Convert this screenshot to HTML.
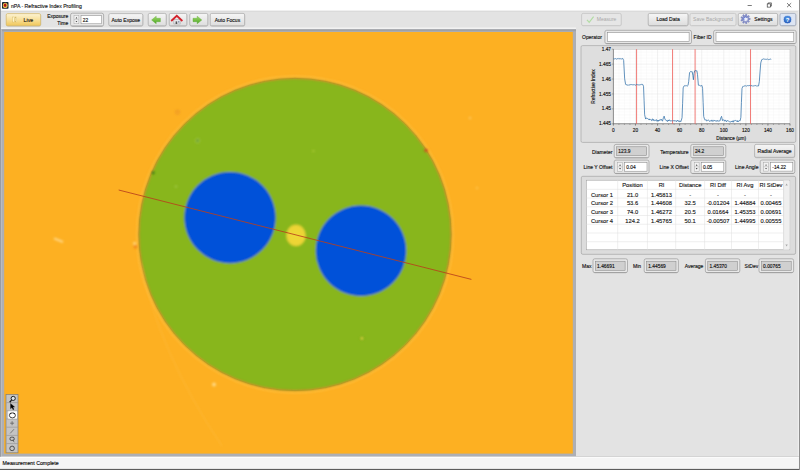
<!DOCTYPE html>
<html><head><meta charset="utf-8"><title>nPA - Refractive Index Profiling</title>
<style>
html,body{margin:0;padding:0;background:#e3e3e3;overflow:hidden}
svg{display:block;font-family:"Liberation Sans",sans-serif;font-size:5.05px;fill:#111}
text{stroke:#111;stroke-width:0.13px}
.ns,.ns text{stroke:none}
.g line{stroke:#e4e4e4;stroke-width:0.5}
.m line{stroke:#f4f4f4;stroke-width:0.4}
.c line{stroke:#ee5a56;stroke-width:0.8}
.tb line{stroke:#dedede;stroke-width:0.5}
.ax text{font-size:4.75px;fill:#111}
.tt text{font-size:5.75px;fill:#1a1a1a}
</style></head><body>
<svg width="800" height="470" viewBox="0 0 800 470">
<defs>
<linearGradient id="gbtn" x1="0" y1="0" x2="0" y2="1"><stop offset="0" stop-color="#f6f6f6"/><stop offset="1" stop-color="#dddddd"/></linearGradient>
<linearGradient id="glive" x1="0" y1="0" x2="0" y2="1"><stop offset="0" stop-color="#fdf4d4"/><stop offset="0.5" stop-color="#f8e09a"/><stop offset="1" stop-color="#f0c658"/></linearGradient>
<radialGradient id="ghelp" cx="0.5" cy="0.35" r="0.7"><stop offset="0" stop-color="#5aa0ee"/><stop offset="1" stop-color="#1c4fb0"/></radialGradient>
<clipPath id="imgclip"><rect x="4.2" y="32" width="568.6" height="421.6"/></clipPath>
<filter id="b1" x="-5%" y="-5%" width="110%" height="110%"><feGaussianBlur stdDeviation="0.8"/></filter>
<filter id="b2" x="-50%" y="-50%" width="200%" height="200%"><feGaussianBlur stdDeviation="0.8"/></filter>
<linearGradient id="gframe" x1="0" y1="0" x2="0" y2="1"><stop offset="0" stop-color="#d4d6da"/><stop offset="0.01" stop-color="#b1b3b8"/><stop offset="1" stop-color="#b1b3b8"/></linearGradient>
<radialGradient id="gyel"><stop offset="0" stop-color="#f0d836"/><stop offset="0.85" stop-color="#ecd436"/><stop offset="1" stop-color="#d2cc30"/></radialGradient>
<linearGradient id="garr" x1="0" y1="0" x2="0" y2="1"><stop offset="0" stop-color="#a4dc6a"/><stop offset="1" stop-color="#4aa524"/></linearGradient>
<filter id="soft" filterUnits="userSpaceOnUse" x="-10" y="-10" width="820" height="490"><feGaussianBlur stdDeviation="0.8"/></filter>
</defs>
<g>

<!-- window background -->
<rect x="-6" y="-6" width="812" height="482" fill="#e3e3e3"/>
<rect x="-6" y="-6" width="812" height="17" fill="#ffffff"/>
<!-- title bar -->
<rect x="2" y="2" width="6.5" height="6.8" rx="0.8" fill="#152430"/>
<ellipse cx="5.2" cy="5.4" rx="2.4" ry="2.6" fill="#e8c050"/><ellipse cx="5.1" cy="5.3" rx="1.3" ry="1.7" fill="#b01414"/>
<text x="11" y="8" font-size="5.15" fill="#222">nPA - Refractive Index Profiling</text>
<g stroke="#222" stroke-width="0.6" fill="none">
<line x1="747.6" y1="5.5" x2="751.8" y2="5.5"/>
<rect x="767.2" y="3.9" width="3.2" height="3.2"/><path d="M768.2,3.9V2.9h3.2v3.2h-1"/>
<path d="M787,3.1 l4.2,4.1 M791.2,3.1 l-4.2,4.1"/>
</g>

<!-- image panel -->
<rect x="0" y="10.6" width="800" height="1.2" fill="#d9d9d9"/><rect x="0" y="27.5" width="576" height="1.4" fill="#f3f3f3"/><rect x="0" y="29.1" width="576" height="427.5" fill="#adafb4"/><rect x="0" y="29.6" width="576" height="1.6" fill="#9fa1a5"/><rect x="-6" y="-6" width="7" height="482" fill="#9a9ca1"/><rect x="1" y="29" width="1" height="427" fill="#b9bbc0"/>
<rect x="4.2" y="32" width="568.6" height="421.6" fill="#fdb022"/>
<g clip-path="url(#imgclip)">
  <circle cx="295" cy="234.5" r="157.8" fill="none" stroke="#ffc242" stroke-width="2.2" opacity="0.7" filter="url(#b1)"/>
  <g filter="url(#b1)">
  <circle cx="295" cy="234.5" r="156" fill="#88b61b" stroke="#b07c2c" stroke-width="0.8"/>
  <circle cx="230" cy="217.6" r="45.6" fill="#0251d9"/>
  <circle cx="361" cy="250.8" r="45.2" fill="#0251d9"/>
  <ellipse cx="296" cy="235.4" rx="9.9" ry="10.9" fill="url(#gyel)"/>
  </g>
  <circle cx="295" cy="234.5" r="156.1" fill="none" stroke="#9c7424" stroke-width="0.5" opacity="0.55"/>
  <g filter="url(#b2)">
   <path d="M54,238.4 l9,3.6" stroke="#ffd684" stroke-width="2" fill="none"/>
   <circle cx="177.5" cy="112.3" r="1.9" fill="none" stroke="#ea9426" stroke-width="1.1"/>
   <circle cx="197.6" cy="140.7" r="2" fill="#5f9a24" stroke="#a8cc54" stroke-width="1"/>
   <circle cx="153.2" cy="172.7" r="1.5" fill="#3f7a18"/>
   <circle cx="176" cy="186.5" r="1.3" fill="#9cc43c"/>
   <circle cx="135.5" cy="246.8" r="2" fill="#f28c20"/><circle cx="134.6" cy="243.3" r="1.6" fill="#ffd478"/>
   <circle cx="361.9" cy="338.4" r="1.8" fill="#e8dc40" stroke="#74a41c" stroke-width="1"/>
   <circle cx="214" cy="384.6" r="2" fill="#ffd880"/>
   <circle cx="426" cy="150.4" r="1.6" fill="#d04a20"/>
   <circle cx="313.4" cy="151" r="1.1" fill="#b0cc3c"/>
   <circle cx="470" cy="118" r="1.3" fill="#ffc656"/>
   <circle cx="477" cy="188" r="1.1" fill="#ffc656"/>
   <path d="M141,262 C150,310 172,372 222,446" stroke="#ffbe48" stroke-width="1.1" fill="none" opacity="0.45"/>
  </g>
  <line x1="118.7" y1="190" x2="471.4" y2="279.4" stroke="#b8401c" stroke-width="0.85"/>
</g>

<!-- tools palette -->
<rect x="6" y="394.6" width="12" height="58.2" fill="#c4c4c4" stroke="#7e7e7e" stroke-width="0.7"/>
<rect x="8.2" y="410.8" width="8.8" height="8.2" fill="#ffffff"/>
<g stroke="#777" stroke-width="0.4">
<line x1="6.6" y1="402.6" x2="17.6" y2="402.6"/><line x1="6.6" y1="410.8" x2="17.6" y2="410.8"/><line x1="6.6" y1="419" x2="17.6" y2="419"/>
<line x1="6.6" y1="427.2" x2="17.6" y2="427.2"/><line x1="6.6" y1="435.4" x2="17.6" y2="435.4"/><line x1="6.6" y1="443.6" x2="17.6" y2="443.6"/>
</g>
<g fill="none" stroke="#111" stroke-width="0.9">
<circle cx="13.2" cy="398.4" r="2.1" fill="#dfe6ea"/><line x1="11.6" y1="400.1" x2="9.7" y2="402.2" stroke-width="1.3"/>
<path d="M10.5,403.4 l0,5.4 l1.4,-1.3 l1.1,2.3 l1,-0.5 l-1.1,-2.2 l1.8,-0.1z" fill="#000" stroke-width="0.3"/>
<path d="M9.4,415.4 a3,2.5 0 1 1 6,0 a3,2.5 0 0 1 -6,0 M9.7,413.8 l1.6,-0.8 M15.1,413.8 l-1.6,-0.8" stroke-width="0.8"/>
<path d="M12.1,421.2v4M10.1,423.2h4" stroke="#5a5a5a" stroke-width="0.7"/>
<path d="M10.2,433.4l3.8,-4.2" stroke="#5a5a5a" stroke-width="0.7"/>
<rect x="10" y="437.2" width="4.2" height="3.2" rx="1.3" stroke="#333" stroke-width="0.8"/><path d="M12.8,440.4l1.5,1.4" stroke="#333" stroke-width="0.8"/>
<circle cx="12.1" cy="448.4" r="2.3" stroke="#333" stroke-width="0.8"/>
</g>

<rect x="797.8" y="11" width="1.1" height="446" fill="#f0f0f0"/>
<!-- status bar -->
<rect x="0" y="456.8" width="800" height="12.2" fill="#f5f5f5"/><rect x="576" y="456.4" width="224" height="0.8" fill="#c8c8c8"/>
<rect x="0" y="457" width="800" height="0.8" fill="#ffffff"/>
<rect x="-6" y="468.9" width="812" height="7" fill="#5c5c5c"/>
<rect x="799" y="-6" width="7" height="482" fill="#8e8e8e"/>
<text x="2.6" y="464.6" font-size="5.25" fill="#000">Measurement Complete</text>

<!-- left toolbar -->
<rect x="6.4" y="14.1" width="34.4" height="12.2" rx="1.7" fill="#c4c4c4" stroke="#c4c4c4" stroke-width="0.7" opacity="0.9"/><rect x="6.2" y="13.6" width="34.4" height="12.2" rx="1.5" fill="url(#glive)" stroke="#d4b868" stroke-width="0.7"/>
<rect x="12.6" y="17" width="1.6" height="5" fill="#fff4c8" stroke="#c8a850" stroke-width="0.3"/><rect x="15.2" y="17" width="1.6" height="5" fill="#fff4c8" stroke="#c8a850" stroke-width="0.3"/>
<text x="28.4" y="21.7" text-anchor="middle" font-size="5.3" fill="#2a2008">Live</text>
<text x="68.3" y="17.9" text-anchor="end" font-size="5" fill="#111">Exposure</text>
<text x="68.3" y="24.5" text-anchor="end" font-size="5" fill="#111">Time</text>
<rect x="70.6" y="13.2" width="33" height="13" rx="1.8" fill="#e8e8e8" stroke="#9a9a9a" stroke-width="0.7"/><path d="M71.8,26.0 H102.39999999999999" stroke="#8a8a8a" stroke-width="0.5"/><rect x="74.0" y="15.6" width="4.9" height="8.2" fill="#f2f2f2" stroke="#9a9a9a" stroke-width="0.4"/><line x1="74.0" y1="19.7" x2="78.9" y2="19.7" stroke="#9a9a9a" stroke-width="0.4"/><path d="M75.5,18.5 l0.95,-1.4 l0.95,1.4z M75.5,20.9 l0.95,1.4 l0.95,-1.4z" fill="#444"/><rect x="81.0" y="15.6" width="20.6" height="8.2" fill="#ffffff" stroke="#808080" stroke-width="0.5"/><text x="82.7" y="21.6" fill="#111" font-size="4.85">22</text>
<rect x="109.0" y="14.1" width="34" height="12.2" rx="1.7" fill="#c4c4c4" stroke="#c4c4c4" stroke-width="0.7" opacity="0.9"/><rect x="108.8" y="13.6" width="34" height="12.2" rx="1.5" fill="url(#gbtn)" stroke="#a9a9a9" stroke-width="0.7"/><text x="125.8" y="21.6" text-anchor="middle" fill="#111">Auto Expose</text>
<rect x="148.39999999999998" y="13.9" width="18" height="12.4" rx="1.7" fill="#c4c4c4" stroke="#c4c4c4" stroke-width="0.7" opacity="0.9"/><rect x="148.2" y="13.4" width="18" height="12.4" rx="1.5" fill="url(#gbtn)" stroke="#a9a9a9" stroke-width="0.7"/>
<path d="M151.6,20 l4.6,-3.8 v2.1 h4.2 v3.4 h-4.2 v2.1z" fill="url(#garr)" stroke="#5aa836" stroke-width="0.4"/>
<rect x="169.39999999999998" y="13.9" width="17.6" height="12.4" rx="1.7" fill="#c4c4c4" stroke="#c4c4c4" stroke-width="0.7" opacity="0.9"/><rect x="169.2" y="13.4" width="17.6" height="12.4" rx="1.5" fill="url(#gbtn)" stroke="#a9a9a9" stroke-width="0.7"/>
<rect x="173.9" y="19.6" width="6.2" height="4.4" fill="#e8e8ec" stroke="#8a8a90" stroke-width="0.4"/><rect x="175.6" y="21.4" width="1.6" height="2.6" fill="#555"/><rect x="178" y="21.2" width="1.4" height="1.3" fill="#7a8aa8"/>
<path d="M171.2,21 l5.6,-5.2 l5.6,5.2" fill="none" stroke="#d3222c" stroke-width="1.8" stroke-linejoin="miter"/>
<rect x="190.0" y="13.9" width="18" height="12.4" rx="1.7" fill="#c4c4c4" stroke="#c4c4c4" stroke-width="0.7" opacity="0.9"/><rect x="189.8" y="13.4" width="18" height="12.4" rx="1.5" fill="url(#gbtn)" stroke="#a9a9a9" stroke-width="0.7"/>
<path d="M201.8,20 l-4.6,-3.8 v2.1 h-4.2 v3.4 h4.2 v2.1z" fill="url(#garr)" stroke="#5aa836" stroke-width="0.4"/>
<rect x="210.39999999999998" y="13.9" width="34.4" height="12.4" rx="1.7" fill="#c4c4c4" stroke="#c4c4c4" stroke-width="0.7" opacity="0.9"/><rect x="210.2" y="13.4" width="34.4" height="12.4" rx="1.5" fill="url(#gbtn)" stroke="#a9a9a9" stroke-width="0.7"/><text x="227.39999999999998" y="21.5" text-anchor="middle" fill="#111">Auto Focus</text>

<!-- right toolbar -->
<rect x="581.8000000000001" y="13.9" width="39.6" height="12.2" rx="1.7" fill="#c4c4c4" stroke="#c4c4c4" stroke-width="0.7" opacity="0.3"/><rect x="581.6" y="13.4" width="39.6" height="12.2" rx="1.5" fill="#e6e6e6" stroke="#c2c2c2" stroke-width="0.7"/><text x="606.6" y="21.4" text-anchor="middle" fill="#a8a8a8" class="ns">Measure</text>
<path d="M587,19.8 l2.2,2.6 l4.4,-5.8" fill="none" stroke="#b2dca4" stroke-width="1.2"/>
<rect x="648.4000000000001" y="13.9" width="39.8" height="12.2" rx="1.7" fill="#c4c4c4" stroke="#c4c4c4" stroke-width="0.7" opacity="0.9"/><rect x="648.2" y="13.4" width="39.8" height="12.2" rx="1.5" fill="url(#gbtn)" stroke="#a9a9a9" stroke-width="0.7"/><text x="668.1" y="21.4" text-anchor="middle" fill="#111">Load Data</text>
<rect x="690.2" y="13.9" width="46" height="12.2" rx="1.7" fill="#c4c4c4" stroke="#c4c4c4" stroke-width="0.7" opacity="0.3"/><rect x="690" y="13.4" width="46" height="12.2" rx="1.5" fill="#e6e6e6" stroke="#c2c2c2" stroke-width="0.7"/><text x="713.0" y="21.4" text-anchor="middle" fill="#a8a8a8" class="ns">Save Background</text>
<rect x="738.4000000000001" y="13.9" width="39.4" height="12.2" rx="1.7" fill="#c4c4c4" stroke="#c4c4c4" stroke-width="0.7" opacity="0.9"/><rect x="738.2" y="13.4" width="39.4" height="12.2" rx="1.5" fill="url(#gbtn)" stroke="#a9a9a9" stroke-width="0.7"/><text x="763.4" y="21.4" text-anchor="middle" fill="#111">Settings</text>
<path d="M750.16,18.31 L750.16,19.49 L748.72,19.63 L748.44,20.41 L749.45,21.45 L748.69,22.35 L747.50,21.53 L746.78,21.94 L746.89,23.39 L745.73,23.59 L745.34,22.20 L744.52,22.05 L743.68,23.23 L742.66,22.64 L743.26,21.32 L742.73,20.69 L741.32,21.05 L740.92,19.94 L742.23,19.31 L742.23,18.49 L740.92,17.86 L741.32,16.75 L742.73,17.11 L743.26,16.48 L742.66,15.16 L743.68,14.57 L744.52,15.75 L745.34,15.60 L745.73,14.21 L746.89,14.41 L746.78,15.86 L747.50,16.27 L748.69,15.45 L749.45,16.35 L748.44,17.39 L748.72,18.17Z" fill="#8a94cc" stroke="#6872b4" stroke-width="0.5" stroke-linejoin="round"/><circle cx="745.5" cy="18.9" r="2.5" fill="#eef0fa" stroke="#5a66aa" stroke-width="0.4"/><path d="M744.2,20.2 a1.8,1.8 0 0 1 2.6,-2.6" fill="none" stroke="#3a58c8" stroke-width="0.8"/>
<rect x="780.2" y="13.9" width="15.8" height="12.2" rx="1.7" fill="#c4c4c4" stroke="#c4c4c4" stroke-width="0.7" opacity="0.9"/><rect x="780" y="13.4" width="15.8" height="12.2" rx="1.5" fill="#dde5f3" stroke="#9aa4b8" stroke-width="0.7"/>
<circle cx="787.5" cy="19.6" r="4.1" fill="url(#ghelp)" stroke="#dfe8f6" stroke-width="0.7"/><text x="787.5" y="21.7" text-anchor="middle" font-size="6" font-weight="bold" fill="#fff" class="ns">?</text>

<!-- operator / fiber -->
<text x="582" y="39.2" fill="#111">Operator</text>
<rect x="604.9" y="30.3" width="86.6" height="13.4" rx="1.8" fill="#e8e8e8" stroke="#9a9a9a" stroke-width="0.7"/><path d="M606.1,43.5 H690.3" stroke="#8a8a8a" stroke-width="0.5"/><rect x="607.3" y="32.7" width="81.8" height="8.600000000000001" fill="#ffffff" stroke="#808080" stroke-width="0.5"/><text x="609.0" y="38.9" fill="#111" font-size="4.85"></text>
<text x="693.6" y="39.2" fill="#111">Fiber ID</text>
<rect x="713.6" y="30.3" width="82.6" height="13.4" rx="1.8" fill="#e8e8e8" stroke="#9a9a9a" stroke-width="0.7"/><path d="M714.8000000000001,43.5 H795.0" stroke="#8a8a8a" stroke-width="0.5"/><rect x="716.0" y="32.7" width="77.8" height="8.600000000000001" fill="#ffffff" stroke="#808080" stroke-width="0.5"/><text x="717.7" y="38.9" fill="#111" font-size="4.85"></text>

<!-- chart -->
<rect x="581" y="45.6" width="214.8" height="96.8" rx="1.5" fill="#dedede" stroke="#a8a8a8" stroke-width="0.7"/>
<rect x="613.4" y="49.2" width="176.6" height="74.6" fill="#ffffff"/>
<g class="m"><line x1="618.92" y1="49.2" x2="618.92" y2="123.8"/><line x1="624.44" y1="49.2" x2="624.44" y2="123.8"/><line x1="629.96" y1="49.2" x2="629.96" y2="123.8"/><line x1="640.99" y1="49.2" x2="640.99" y2="123.8"/><line x1="646.51" y1="49.2" x2="646.51" y2="123.8"/><line x1="652.03" y1="49.2" x2="652.03" y2="123.8"/><line x1="663.07" y1="49.2" x2="663.07" y2="123.8"/><line x1="668.59" y1="49.2" x2="668.59" y2="123.8"/><line x1="674.11" y1="49.2" x2="674.11" y2="123.8"/><line x1="685.14" y1="49.2" x2="685.14" y2="123.8"/><line x1="690.66" y1="49.2" x2="690.66" y2="123.8"/><line x1="696.18" y1="49.2" x2="696.18" y2="123.8"/><line x1="707.22" y1="49.2" x2="707.22" y2="123.8"/><line x1="712.74" y1="49.2" x2="712.74" y2="123.8"/><line x1="718.26" y1="49.2" x2="718.26" y2="123.8"/><line x1="729.29" y1="49.2" x2="729.29" y2="123.8"/><line x1="734.81" y1="49.2" x2="734.81" y2="123.8"/><line x1="740.33" y1="49.2" x2="740.33" y2="123.8"/><line x1="751.37" y1="49.2" x2="751.37" y2="123.8"/><line x1="756.89" y1="49.2" x2="756.89" y2="123.8"/><line x1="762.41" y1="49.2" x2="762.41" y2="123.8"/><line x1="773.44" y1="49.2" x2="773.44" y2="123.8"/><line x1="778.96" y1="49.2" x2="778.96" y2="123.8"/><line x1="784.48" y1="49.2" x2="784.48" y2="123.8"/><line x1="613.4" y1="120.82" x2="790.0" y2="120.82"/><line x1="613.4" y1="117.83" x2="790.0" y2="117.83"/><line x1="613.4" y1="114.85" x2="790.0" y2="114.85"/><line x1="613.4" y1="111.86" x2="790.0" y2="111.86"/><line x1="613.4" y1="105.90" x2="790.0" y2="105.90"/><line x1="613.4" y1="102.91" x2="790.0" y2="102.91"/><line x1="613.4" y1="99.93" x2="790.0" y2="99.93"/><line x1="613.4" y1="96.94" x2="790.0" y2="96.94"/><line x1="613.4" y1="90.98" x2="790.0" y2="90.98"/><line x1="613.4" y1="87.99" x2="790.0" y2="87.99"/><line x1="613.4" y1="85.01" x2="790.0" y2="85.01"/><line x1="613.4" y1="82.02" x2="790.0" y2="82.02"/><line x1="613.4" y1="76.06" x2="790.0" y2="76.06"/><line x1="613.4" y1="73.07" x2="790.0" y2="73.07"/><line x1="613.4" y1="70.09" x2="790.0" y2="70.09"/><line x1="613.4" y1="67.10" x2="790.0" y2="67.10"/><line x1="613.4" y1="61.14" x2="790.0" y2="61.14"/><line x1="613.4" y1="58.15" x2="790.0" y2="58.15"/><line x1="613.4" y1="55.17" x2="790.0" y2="55.17"/><line x1="613.4" y1="52.18" x2="790.0" y2="52.18"/></g>
<g class="g"><line x1="613.40" y1="49.2" x2="613.40" y2="123.8"/><line x1="635.48" y1="49.2" x2="635.48" y2="123.8"/><line x1="657.55" y1="49.2" x2="657.55" y2="123.8"/><line x1="679.62" y1="49.2" x2="679.62" y2="123.8"/><line x1="701.70" y1="49.2" x2="701.70" y2="123.8"/><line x1="723.77" y1="49.2" x2="723.77" y2="123.8"/><line x1="745.85" y1="49.2" x2="745.85" y2="123.8"/><line x1="767.92" y1="49.2" x2="767.92" y2="123.8"/><line x1="790.00" y1="49.2" x2="790.00" y2="123.8"/><line x1="613.4" y1="123.80" x2="790.0" y2="123.80"/><line x1="613.4" y1="108.88" x2="790.0" y2="108.88"/><line x1="613.4" y1="93.96" x2="790.0" y2="93.96"/><line x1="613.4" y1="79.04" x2="790.0" y2="79.04"/><line x1="613.4" y1="64.12" x2="790.0" y2="64.12"/><line x1="613.4" y1="49.20" x2="790.0" y2="49.20"/></g>
<rect x="613.4" y="49.2" width="176.6" height="74.6" fill="none" stroke="#b8b8b8" stroke-width="0.4"/>
<path d="M613.4,49.2V123.8H790.0" fill="none" stroke="#444" stroke-width="0.5"/>
<g stroke="#555" stroke-width="0.4"><line x1="613.40" y1="123.8" x2="613.40" y2="126.0"/><line x1="635.48" y1="123.8" x2="635.48" y2="126.0"/><line x1="657.55" y1="123.8" x2="657.55" y2="126.0"/><line x1="679.62" y1="123.8" x2="679.62" y2="126.0"/><line x1="701.70" y1="123.8" x2="701.70" y2="126.0"/><line x1="723.77" y1="123.8" x2="723.77" y2="126.0"/><line x1="745.85" y1="123.8" x2="745.85" y2="126.0"/><line x1="767.92" y1="123.8" x2="767.92" y2="126.0"/><line x1="790.00" y1="123.8" x2="790.00" y2="126.0"/><line x1="613.40" y1="123.8" x2="613.40" y2="125.0"/><line x1="618.92" y1="123.8" x2="618.92" y2="125.0"/><line x1="624.44" y1="123.8" x2="624.44" y2="125.0"/><line x1="629.96" y1="123.8" x2="629.96" y2="125.0"/><line x1="635.48" y1="123.8" x2="635.48" y2="125.0"/><line x1="640.99" y1="123.8" x2="640.99" y2="125.0"/><line x1="646.51" y1="123.8" x2="646.51" y2="125.0"/><line x1="652.03" y1="123.8" x2="652.03" y2="125.0"/><line x1="657.55" y1="123.8" x2="657.55" y2="125.0"/><line x1="663.07" y1="123.8" x2="663.07" y2="125.0"/><line x1="668.59" y1="123.8" x2="668.59" y2="125.0"/><line x1="674.11" y1="123.8" x2="674.11" y2="125.0"/><line x1="679.62" y1="123.8" x2="679.62" y2="125.0"/><line x1="685.14" y1="123.8" x2="685.14" y2="125.0"/><line x1="690.66" y1="123.8" x2="690.66" y2="125.0"/><line x1="696.18" y1="123.8" x2="696.18" y2="125.0"/><line x1="701.70" y1="123.8" x2="701.70" y2="125.0"/><line x1="707.22" y1="123.8" x2="707.22" y2="125.0"/><line x1="712.74" y1="123.8" x2="712.74" y2="125.0"/><line x1="718.26" y1="123.8" x2="718.26" y2="125.0"/><line x1="723.77" y1="123.8" x2="723.77" y2="125.0"/><line x1="729.29" y1="123.8" x2="729.29" y2="125.0"/><line x1="734.81" y1="123.8" x2="734.81" y2="125.0"/><line x1="740.33" y1="123.8" x2="740.33" y2="125.0"/><line x1="745.85" y1="123.8" x2="745.85" y2="125.0"/><line x1="751.37" y1="123.8" x2="751.37" y2="125.0"/><line x1="756.89" y1="123.8" x2="756.89" y2="125.0"/><line x1="762.41" y1="123.8" x2="762.41" y2="125.0"/><line x1="767.92" y1="123.8" x2="767.92" y2="125.0"/><line x1="773.44" y1="123.8" x2="773.44" y2="125.0"/><line x1="778.96" y1="123.8" x2="778.96" y2="125.0"/><line x1="784.48" y1="123.8" x2="784.48" y2="125.0"/><line x1="790.00" y1="123.8" x2="790.00" y2="125.0"/><line x1="611.8" y1="123.80" x2="613.4" y2="123.80"/><line x1="611.8" y1="108.88" x2="613.4" y2="108.88"/><line x1="611.8" y1="93.96" x2="613.4" y2="93.96"/><line x1="611.8" y1="79.04" x2="613.4" y2="79.04"/><line x1="611.8" y1="64.12" x2="613.4" y2="64.12"/><line x1="611.8" y1="49.20" x2="613.4" y2="49.20"/></g>
<g class="c"><line x1="636.58" y1="49.2" x2="636.58" y2="123.8"/><line x1="672.56" y1="49.2" x2="672.56" y2="123.8"/><line x1="695.08" y1="49.2" x2="695.08" y2="123.8"/><line x1="750.49" y1="49.2" x2="750.49" y2="123.8"/></g>
<path d="M613.40,58.97 L613.95,58.71 L614.50,58.86 L615.06,58.66 L615.61,58.64 L616.16,59.11 L616.71,59.16 L617.26,58.47 L617.81,58.95 L618.37,58.97 L618.92,58.33 L619.47,58.77 L620.02,58.47 L620.57,58.77 L621.13,58.63 L621.68,59.04 L622.23,58.64 L622.78,58.44 L623.66,60.52 L624.66,78.84 L625.54,83.97 L626.09,84.92 L626.64,84.79 L627.20,84.92 L627.75,85.15 L628.30,85.37 L628.85,84.66 L629.40,84.98 L629.96,84.76 L630.51,84.62 L631.06,84.75 L631.61,84.56 L632.16,84.99 L632.72,84.64 L633.27,84.93 L633.82,84.51 L634.37,84.55 L634.92,85.19 L635.48,85.15 L636.03,85.07 L636.58,84.43 L637.13,84.87 L637.68,84.70 L638.23,84.96 L638.79,84.78 L639.34,84.87 L639.89,84.89 L640.44,84.68 L640.99,84.67 L641.55,84.39 L642.10,84.57 L642.65,84.35 L643.53,86.20 L644.08,100.26 L644.64,114.70 L645.63,119.07 L646.29,118.04 L646.95,118.14 L647.62,118.55 L648.17,119.25 L648.72,119.04 L649.27,120.05 L649.82,118.93 L650.38,119.48 L650.93,120.09 L651.48,120.58 L652.03,119.13 L652.58,118.93 L653.13,120.71 L653.69,119.42 L654.24,120.24 L654.79,120.81 L655.34,120.61 L655.89,119.78 L656.45,119.66 L657.00,121.31 L657.55,120.30 L658.10,121.35 L658.65,120.03 L659.21,120.74 L659.76,119.66 L660.31,119.43 L660.86,120.31 L661.41,119.33 L661.97,120.62 L662.52,121.03 L663.51,117.34 L664.17,116.13 L665.06,119.60 L665.72,119.95 L666.38,120.31 L666.93,121.22 L667.48,121.48 L668.04,119.94 L668.59,121.04 L669.14,119.85 L669.69,120.02 L670.24,121.05 L670.79,120.93 L671.35,120.86 L671.90,120.67 L672.45,120.80 L673.00,120.92 L673.55,120.84 L674.11,120.27 L674.66,121.08 L675.21,121.20 L675.76,120.62 L676.31,121.52 L676.87,121.38 L677.42,120.06 L677.97,120.91 L678.52,120.84 L679.07,121.84 L679.62,121.05 L680.18,120.71 L680.73,121.76 L681.28,120.59 L682.05,117.58 L682.61,103.28 L683.16,87.89 L684.04,85.93 L684.61,85.71 L685.18,85.94 L685.74,85.60 L686.31,85.53 L686.88,86.09 L687.45,86.01 L688.01,85.46 L688.68,81.64 L689.56,72.68 L690.44,71.62 L691.03,71.50 L691.62,71.73 L692.21,71.69 L692.87,75.62 L693.42,79.75 L693.97,73.59 L694.64,70.85 L695.19,70.79 L695.74,70.46 L696.29,71.08 L696.84,70.63 L697.51,74.37 L698.39,85.17 L698.94,85.54 L699.49,85.35 L700.10,85.82 L700.71,85.87 L701.31,85.66 L701.92,85.44 L702.58,88.32 L703.13,102.31 L703.69,116.48 L704.57,119.28 L705.23,120.19 L705.89,119.54 L706.56,121.00 L707.22,120.83 L707.77,120.26 L708.32,119.84 L708.87,120.70 L709.43,121.16 L709.98,121.39 L710.53,120.64 L711.08,121.32 L711.63,120.17 L712.19,120.14 L712.74,121.42 L713.29,121.24 L713.84,120.23 L714.39,120.54 L714.94,120.23 L715.50,121.11 L716.05,121.52 L716.60,121.21 L717.15,120.25 L717.70,121.25 L718.26,121.11 L718.81,120.97 L719.36,120.97 L719.91,120.99 L720.91,117.63 L721.57,116.33 L722.45,120.57 L723.11,119.52 L723.77,120.39 L724.33,120.20 L724.88,121.28 L725.43,120.31 L725.98,120.37 L726.53,121.74 L727.09,120.76 L727.64,120.60 L728.19,120.95 L728.74,121.25 L729.29,121.70 L729.85,121.62 L730.40,121.86 L730.95,122.18 L731.50,121.21 L732.05,121.80 L732.61,120.82 L733.18,122.24 L733.76,120.55 L734.34,120.91 L734.91,120.42 L735.49,120.43 L736.07,120.37 L736.65,120.94 L737.22,121.98 L737.80,120.53 L738.38,121.58 L738.96,121.29 L739.53,120.55 L740.11,120.77 L740.88,117.31 L741.43,102.55 L741.99,88.50 L742.87,86.33 L743.47,86.35 L744.06,85.78 L744.66,86.04 L745.25,85.73 L745.85,86.03 L746.40,86.14 L746.95,85.85 L747.51,85.60 L748.06,86.13 L748.61,85.59 L749.16,85.47 L749.71,85.56 L750.26,85.53 L750.82,86.20 L751.37,85.67 L751.92,85.46 L752.47,86.12 L753.02,85.93 L753.58,85.91 L754.13,85.69 L754.68,85.76 L755.23,85.71 L755.78,85.44 L756.34,86.07 L756.89,86.02 L757.44,85.94 L757.99,85.93 L758.54,85.97 L759.32,81.63 L760.03,72.03 L760.75,62.97 L761.30,60.99 L761.85,59.50 L762.41,59.40 L762.96,59.27 L763.51,58.92 L764.06,59.00 L764.61,59.21 L765.17,59.37 L765.72,59.28 L766.27,59.47 L766.82,59.13 L767.37,59.02 L767.92,59.32 L768.48,59.59 L769.03,59.53 L769.58,59.39 L770.13,59.22 L770.68,59.09 L771.24,59.35" fill="none" stroke="#2f6fa8" stroke-width="0.75" stroke-linejoin="round"/>
<g class="ax"><text x="613.40" y="132.4" text-anchor="middle">0</text><text x="635.48" y="132.4" text-anchor="middle">20</text><text x="657.55" y="132.4" text-anchor="middle">40</text><text x="679.62" y="132.4" text-anchor="middle">60</text><text x="701.70" y="132.4" text-anchor="middle">80</text><text x="723.77" y="132.4" text-anchor="middle">100</text><text x="745.85" y="132.4" text-anchor="middle">120</text><text x="767.92" y="132.4" text-anchor="middle">140</text><text x="790.00" y="132.4" text-anchor="middle">160</text><text x="611" y="125.40" text-anchor="end">1.445</text><text x="611" y="110.48" text-anchor="end">1.45</text><text x="611" y="95.56" text-anchor="end">1.455</text><text x="611" y="80.64" text-anchor="end">1.46</text><text x="611" y="65.72" text-anchor="end">1.465</text><text x="611" y="50.80" text-anchor="end">1.47</text>
<text x="731.2" y="139.7" text-anchor="middle">Distance (µm)</text>
<text transform="translate(595.4,86.5) rotate(-90)" text-anchor="middle">Refractive Index</text>
</g>

<!-- parameter rows -->
<text x="612.4" y="153.7" text-anchor="end" fill="#111">Diameter</text>
<rect x="614.2" y="144.4" width="34.8" height="13.5" rx="1.8" fill="#e8e8e8" stroke="#9a9a9a" stroke-width="0.7"/><path d="M615.4000000000001,157.70000000000002 H647.8" stroke="#8a8a8a" stroke-width="0.5"/><rect x="616.6" y="146.8" width="29.999999999999996" height="8.7" fill="#d0d0d0" stroke="#808080" stroke-width="0.5"/><text x="618.3000000000001" y="153.1" fill="#111" font-size="4.85">123.9</text>
<text x="688.6" y="153.7" text-anchor="end" fill="#111">Temperature</text>
<rect x="690.8" y="144.4" width="35" height="13.5" rx="1.8" fill="#e8e8e8" stroke="#9a9a9a" stroke-width="0.7"/><path d="M692.0,157.70000000000002 H724.5999999999999" stroke="#8a8a8a" stroke-width="0.5"/><rect x="693.1999999999999" y="146.8" width="30.2" height="8.7" fill="#d0d0d0" stroke="#808080" stroke-width="0.5"/><text x="694.9" y="153.1" fill="#111" font-size="4.85">24.2</text>
<rect x="754.8000000000001" y="144.9" width="40" height="13" rx="1.7" fill="#c4c4c4" stroke="#c4c4c4" stroke-width="0.7" opacity="0.9"/><rect x="754.6" y="144.4" width="40" height="13" rx="1.5" fill="url(#gbtn)" stroke="#a9a9a9" stroke-width="0.7"/><text x="774.6" y="152.8" text-anchor="middle" fill="#111">Radial Average</text>
<text x="612.4" y="169.3" text-anchor="end" fill="#111">Line Y Offset</text>
<rect x="614.2" y="160.1" width="34.8" height="13.5" rx="1.8" fill="#e8e8e8" stroke="#9a9a9a" stroke-width="0.7"/><path d="M615.4000000000001,173.4 H647.8" stroke="#8a8a8a" stroke-width="0.5"/><rect x="617.6" y="162.5" width="4.9" height="8.7" fill="#f2f2f2" stroke="#9a9a9a" stroke-width="0.4"/><line x1="617.6" y1="166.85" x2="622.5" y2="166.85" stroke="#9a9a9a" stroke-width="0.4"/><path d="M619.1,165.65 l0.95,-1.4 l0.95,1.4z M619.1,168.04999999999998 l0.95,1.4 l0.95,-1.4z" fill="#444"/><rect x="624.6" y="162.5" width="22.4" height="8.7" fill="#ffffff" stroke="#808080" stroke-width="0.5"/><text x="626.3000000000001" y="168.8" fill="#111" font-size="4.85">0.04</text>
<text x="688.6" y="169.3" text-anchor="end" fill="#111">Line X Offset</text>
<rect x="690.8" y="160.1" width="35" height="13.5" rx="1.8" fill="#e8e8e8" stroke="#9a9a9a" stroke-width="0.7"/><path d="M692.0,173.4 H724.5999999999999" stroke="#8a8a8a" stroke-width="0.5"/><rect x="694.1999999999999" y="162.5" width="4.9" height="8.7" fill="#f2f2f2" stroke="#9a9a9a" stroke-width="0.4"/><line x1="694.1999999999999" y1="166.85" x2="699.0999999999999" y2="166.85" stroke="#9a9a9a" stroke-width="0.4"/><path d="M695.6999999999999,165.65 l0.95,-1.4 l0.95,1.4z M695.6999999999999,168.04999999999998 l0.95,1.4 l0.95,-1.4z" fill="#444"/><rect x="701.1999999999999" y="162.5" width="22.6" height="8.7" fill="#ffffff" stroke="#808080" stroke-width="0.5"/><text x="702.9" y="168.8" fill="#111" font-size="4.85">0.05</text>
<text x="758.5" y="169.3" text-anchor="end" fill="#111">Line Angle</text>
<rect x="760.2" y="160" width="34.6" height="13.5" rx="1.8" fill="#e8e8e8" stroke="#9a9a9a" stroke-width="0.7"/><path d="M761.4000000000001,173.3 H793.6" stroke="#8a8a8a" stroke-width="0.5"/><rect x="763.6" y="162.4" width="4.9" height="8.7" fill="#f2f2f2" stroke="#9a9a9a" stroke-width="0.4"/><line x1="763.6" y1="166.75" x2="768.5" y2="166.75" stroke="#9a9a9a" stroke-width="0.4"/><path d="M765.1,165.55 l0.95,-1.4 l0.95,1.4z M765.1,167.95 l0.95,1.4 l0.95,-1.4z" fill="#444"/><rect x="770.6" y="162.4" width="22.200000000000003" height="8.7" fill="#ffffff" stroke="#808080" stroke-width="0.5"/><text x="772.3000000000001" y="168.7" fill="#111" font-size="4.85">-14.22</text>

<!-- table -->
<rect x="581.3" y="176.3" width="214.3" height="78" rx="1.5" fill="#dcdcdc" stroke="#a4a4a4" stroke-width="0.7"/>
<rect x="586.4" y="180.2" width="203.4" height="69.6" fill="#ffffff" stroke="#9c9c9c" stroke-width="0.5"/>
<g class="tb"><line x1="617.7" y1="180.2" x2="617.7" y2="249.8"/><line x1="647.4" y1="180.2" x2="647.4" y2="249.8"/><line x1="675.7" y1="180.2" x2="675.7" y2="249.8"/><line x1="704.6" y1="180.2" x2="704.6" y2="249.8"/><line x1="731.5" y1="180.2" x2="731.5" y2="249.8"/><line x1="758.5" y1="180.2" x2="758.5" y2="249.8"/><line x1="783.6" y1="180.2" x2="783.6" y2="249.8"/><line x1="586.4" y1="189.3" x2="783.6" y2="189.3"/><line x1="586.4" y1="198.04000000000002" x2="783.6" y2="198.04000000000002"/><line x1="586.4" y1="206.78" x2="783.6" y2="206.78"/><line x1="586.4" y1="215.52" x2="783.6" y2="215.52"/><line x1="586.4" y1="224.26000000000002" x2="783.6" y2="224.26000000000002"/><line x1="586.4" y1="233.0" x2="783.6" y2="233.0"/><line x1="586.4" y1="241.74" x2="783.6" y2="241.74"/></g>
<rect x="783.6" y="180.4" width="6" height="69.2" fill="#efefef"/>
<line x1="783.6" y1="180.2" x2="783.6" y2="249.8" stroke="#cfcfcf" stroke-width="0.5"/>
<path d="M785.4,185.4 l1.2,-1.8 l1.2,1.8z M785.4,244.6 l1.2,1.8 l1.2,-1.8z" fill="#a8a8a8"/>
<g class="tt"><text x="632.5" y="187.1" text-anchor="middle">Position</text><text x="661.5" y="187.1" text-anchor="middle">RI</text><text x="690.2" y="187.1" text-anchor="middle">Distance</text><text x="718.0" y="187.1" text-anchor="middle">RI Diff</text><text x="745.0" y="187.1" text-anchor="middle">RI Avg</text><text x="771.0" y="187.1" text-anchor="middle">RI StDev</text><text x="602.0" y="196.5" text-anchor="middle">Cursor 1</text><text x="632.5" y="196.5" text-anchor="middle">21.0</text><text x="661.5" y="196.5" text-anchor="middle">1.45813</text><text x="690.2" y="196.5" text-anchor="middle">-</text><text x="718.0" y="196.5" text-anchor="middle">-</text><text x="745.0" y="196.5" text-anchor="middle">-</text><text x="771.0" y="196.5" text-anchor="middle">-</text><text x="602.0" y="205.2" text-anchor="middle">Cursor 2</text><text x="632.5" y="205.2" text-anchor="middle">53.6</text><text x="661.5" y="205.2" text-anchor="middle">1.44608</text><text x="690.2" y="205.2" text-anchor="middle">32.5</text><text x="718.0" y="205.2" text-anchor="middle">-0.01204</text><text x="745.0" y="205.2" text-anchor="middle">1.44884</text><text x="771.0" y="205.2" text-anchor="middle">0.00465</text><text x="602.0" y="214.0" text-anchor="middle">Cursor 3</text><text x="632.5" y="214.0" text-anchor="middle">74.0</text><text x="661.5" y="214.0" text-anchor="middle">1.46272</text><text x="690.2" y="214.0" text-anchor="middle">20.5</text><text x="718.0" y="214.0" text-anchor="middle">0.01664</text><text x="745.0" y="214.0" text-anchor="middle">1.45353</text><text x="771.0" y="214.0" text-anchor="middle">0.00691</text><text x="602.0" y="222.7" text-anchor="middle">Cursor 4</text><text x="632.5" y="222.7" text-anchor="middle">124.2</text><text x="661.5" y="222.7" text-anchor="middle">1.45765</text><text x="690.2" y="222.7" text-anchor="middle">50.1</text><text x="718.0" y="222.7" text-anchor="middle">-0.00507</text><text x="745.0" y="222.7" text-anchor="middle">1.44995</text><text x="771.0" y="222.7" text-anchor="middle">0.00555</text></g>

<!-- stats -->
<text x="582" y="267.8" fill="#111">Max</text>
<rect x="593" y="258.8" width="34.5" height="13.9" rx="1.8" fill="#e8e8e8" stroke="#9a9a9a" stroke-width="0.7"/><path d="M594.2,272.5 H626.3" stroke="#8a8a8a" stroke-width="0.5"/><rect x="595.4" y="261.2" width="29.7" height="9.100000000000001" fill="#d0d0d0" stroke="#808080" stroke-width="0.5"/><text x="597.1" y="267.6" fill="#111" font-size="4.85">1.46691</text>
<text x="633" y="267.8" fill="#111">Min</text>
<rect x="644.2" y="258.8" width="34.2" height="13.9" rx="1.8" fill="#e8e8e8" stroke="#9a9a9a" stroke-width="0.7"/><path d="M645.4000000000001,272.5 H677.2" stroke="#8a8a8a" stroke-width="0.5"/><rect x="646.6" y="261.2" width="29.400000000000002" height="9.100000000000001" fill="#d0d0d0" stroke="#808080" stroke-width="0.5"/><text x="648.3000000000001" y="267.6" fill="#111" font-size="4.85">1.44569</text>
<text x="684.7" y="267.8" fill="#111">Average</text>
<rect x="705.4" y="258.8" width="34.4" height="13.9" rx="1.8" fill="#e8e8e8" stroke="#9a9a9a" stroke-width="0.7"/><path d="M706.6,272.5 H738.5999999999999" stroke="#8a8a8a" stroke-width="0.5"/><rect x="707.8" y="261.2" width="29.599999999999998" height="9.100000000000001" fill="#d0d0d0" stroke="#808080" stroke-width="0.5"/><text x="709.5" y="267.6" fill="#111" font-size="4.85">1.45370</text>
<text x="744.6" y="267.8" fill="#111">StDev</text>
<rect x="759" y="258.8" width="34.6" height="13.9" rx="1.8" fill="#e8e8e8" stroke="#9a9a9a" stroke-width="0.7"/><path d="M760.2,272.5 H792.4" stroke="#8a8a8a" stroke-width="0.5"/><rect x="761.4" y="261.2" width="29.8" height="9.100000000000001" fill="#d0d0d0" stroke="#808080" stroke-width="0.5"/><text x="763.1" y="267.6" fill="#111" font-size="4.85">0.00765</text>
</g>
</svg>
</body></html>
